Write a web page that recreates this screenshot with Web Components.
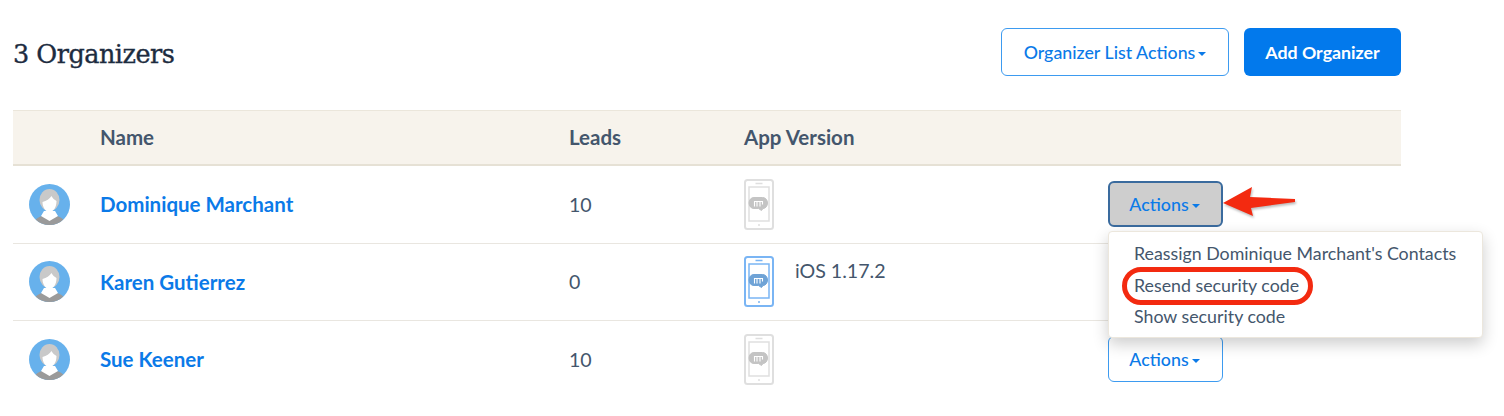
<!DOCTYPE html>
<html>
<head>
<meta charset="utf-8">
<title>Organizers</title>
<style>
    html, body { margin: 0; background: #fff; height: 416px; overflow: hidden; }
    body { font-family: Lato, sans-serif; color: #44566c; }
</style>
</head>
<body>
<organizers-page>
    <page-header slot="header" title="3 Organizers"></page-header>
    <table-head slot="table"></table-head>
    <organizer-row slot="table" name="Dominique Marchant" leads="10" open></organizer-row>
    <organizer-row slot="table" name="Karen Gutierrez" leads="0" version="iOS 1.17.2" covered></organizer-row>
    <organizer-row slot="table" name="Sue Keener" leads="10" last></organizer-row>
</organizers-page>

<script>
// Shared phone icon, the stroke colour comes from currentColor
const phoneIcon = `
    <svg width="30" height="51" viewBox="0 0 30 51" fill="none" stroke="currentColor">
        <rect x="1" y="1" width="28" height="49" rx="2.5" stroke-width="2"/>
        <rect x="5" y="8" width="20" height="34" stroke-width="1.5"/>
        <path d="M11.500 4.500h7M14 46h2" stroke-width="1.500"/>
        <path d="M10 18.500h8.500c3 0 5 2.500 5 5.500s-2 5.500-4.500 5.500l-1.500 2-3-2H10c-3 0-5-2.500-5-5.500s2-5.500 5-5.500z" fill="var(--bubble)" stroke="var(--bubble)" stroke-width="1"/>
        <path d="M10.500 27.500v-5h2.500v5M13 22.500h3v5M16 22.500h2.500v3" stroke-width="1.100" stroke="#fff"/>
    </svg>`;

class OrganizersPage extends HTMLElement {
    constructor() {
        super();
        this.attachShadow({ mode: 'open' });
        this.shadowRoot.innerHTML = `
            <style>
                :host { display: block; position: relative; width: 1504px; height: 416px; overflow: hidden; }
                .wrap { width: 1388px; margin-left: 13px; padding-top: 28px; }
                .table { margin-top: 34px; }
            </style>
            <div class="wrap">
                <slot name="header"></slot>
                <div class="table"><slot name="table"></slot></div>
            </div>
        `;
    }
}

class PageHeader extends HTMLElement {
    constructor() {
        super();
        this.attachShadow({ mode: 'open' });
        this.shadowRoot.innerHTML = `
            <style>
                :host { display: flex; align-items: center; justify-content: space-between; height: 48px; }
                h1 { margin: 0; padding-top: 5px; font: 400 25.500px/1 "DejaVu Serif", serif; color: #1d2c3f; letter-spacing: -0.5px; -webkit-text-stroke: .35px #1d2c3f; }
                .btns { display: flex; gap: 15px; }
                button { box-sizing: border-box; height: 48px; border-radius: 6px; font: 500 17.800px Lato, sans-serif; padding: 0; cursor: pointer; }
                .outline { width: 228px; background: #fff; color: #0b7ae8; border: 1.500px solid #3d9bf0; }
                .solid { width: 157px; background: #0279ec; color: #fff; border: none; font-weight: 700; }
                i { display: inline-block; vertical-align: 3px; margin-left: 3px; border: 4.500px solid transparent; border-top-color: currentColor; border-bottom: 0; }
            </style>
            <h1></h1>
            <div class="btns">
                <button class="outline">Organizer List Actions<i></i></button>
                <button class="solid">Add Organizer</button>
            </div>
        `;
    }

    connectedCallback() {
        this.shadowRoot.querySelector('h1').innerText = this.getAttribute('title');
    }
}

class TableHead extends HTMLElement {
    constructor() {
        super();
        this.attachShadow({ mode: 'open' });
        this.shadowRoot.innerHTML = `
            <style>
                :host {
                    display: grid;
                    grid-template-columns: 87px 469px 175px 1fr;
                    align-items: center;
                    box-sizing: border-box;
                    height: 56px;
                    padding-bottom: 2px;
                    background: #f7f3ec;
                    border-top: 1px solid #ebe6db;
                    border-bottom: 2px solid #e6e1d5;
                    font: 700 20.500px Lato, sans-serif;
                    color: #44566c;
                }
            </style>
            <span></span><span>Name</span><span>Leads</span><span>App Version</span>
        `;
    }
}

class OrganizerRow extends HTMLElement {
    constructor() {
        super();
        this.attachShadow({ mode: 'open' });
        this.shadowRoot.innerHTML = `
            <style>
                :host {
                    display: grid;
                    grid-template-columns: 87px 469px 175px 364px 1fr;
                    align-items: center;
                    box-sizing: border-box;
                    height: 77.500px;
                    border-bottom: 1px solid #e9e6e0;
                    position: relative;
                    font: 400 19.600px Lato, sans-serif;
                    color: #44566c;
                }
                :host([last]) { border-bottom: 1px solid transparent; }
                .avatar { margin-left: 16px; }
                a { font-weight: 700; font-size: 20.500px; color: #0b7ae8; text-decoration: none; }
                .app { display: flex; align-items: flex-start; gap: 21px; }
                .phone { color: #dfdfdf; --bubble: #c4c4c4; display: flex; }
                :host([version]) .phone { color: #7ab5f4; --bubble: #6fa3d6; }
                .ver { padding-top: 4px; line-height: 22px; }
                .action { display: block; box-sizing: border-box; width: 115px; height: 46px; border: 1.500px solid #3d9bf0; border-radius: 6px; background: #fff; color: #0b7ae8; font: 500 17.800px Lato, sans-serif; padding: 0 2px 0 0; }
                :host([open]) .action { background: #cecece; border: 2px solid #3a6b9e; }
                i { display: inline-block; vertical-align: 3px; margin-left: 3px; border: 4.500px solid transparent; border-top-color: currentColor; border-bottom: 0; }
                .menu {
                    position: absolute; z-index: 2; left: 1095px; top: 65px; box-sizing: border-box;
                    width: 375px; height: 107px; padding: 6px 0 0 25px;
                    background: #fff; border: 1px solid #ece7dd; border-radius: 4px;
                    box-shadow: 0 6px 16px rgba(0,0,0,.2);
                    font-size: 17.800px; line-height: 31.500px;
                }
                .menu div { white-space: nowrap; }
                .ring { position: absolute; left: 13px; top: 35px; width: 191px; height: 38px; box-sizing: border-box; border: 5.500px solid #f32a10; border-radius: 19px; }
                .arrow { position: absolute; left: 1205px; top: 16px; z-index: 3; }
            </style>
            <svg class="avatar" width="41" height="41" viewBox="0 0 41 41">
                <defs><clipPath id="c"><circle cx="20.500" cy="20.500" r="20.500"/></clipPath></defs>
                <g clip-path="url(#c)">
                    <rect width="41" height="41" fill="#67b1ec"/>
                    <path d="M4 41c1-7 8-9 13-10h7c5 1 12 3 13 10z" fill="#9a9a9a"/>
                    <ellipse cx="20.500" cy="16" rx="10" ry="11" fill="#c9c9c9"/>
                    <path d="M13.500 18c4-1 7-3 9-6 1 2 3 4 5 5 0 7-3.500 11-7 11s-7-4-7-10z" fill="#fff"/>
                    <path d="M15 27h11l3 5-8.500 5-8.500-5z" fill="#fff"/>
                </g>
            </svg>
            <a href="#" class="name"></a>
            <span class="leads"></span>
            <div class="app"><span class="phone">${phoneIcon}</span><span class="ver"></span></div>
            <div class="cell"><button class="action">Actions<i></i></button></div>
        `;
    }

    connectedCallback() {
        const root = this.shadowRoot;
        root.querySelector('.name').innerText = this.getAttribute('name');
        root.querySelector('.leads').innerText = this.getAttribute('leads');
        root.querySelector('.ver').innerText = this.getAttribute('version') || '';

        // The open menu lies on top of this row's button, so it is not drawn
        if (this.hasAttribute('covered')) root.querySelector('.action').remove();

        // Only the opened row carries the menu and the red annotations
        if (this.hasAttribute('open')) {
            const who = this.getAttribute('name');
            root.querySelector('.cell').insertAdjacentHTML('beforeend', `
                <div class="menu">
                    <div>Reassign ${who}'s Contacts</div>
                    <div>Resend security code</div>
                    <div>Show security code</div>
                    <div class="ring"></div>
                </div>
                <svg class="arrow" width="80" height="40" viewBox="0 0 80 40">
                    <path d="M5 21 L34 5 L32 15 L77 17 L77 20 L33 26 L35 34 Z" fill="#f32a10" style="filter:drop-shadow(1px 2px 1px rgba(0,0,0,.25))"/>
                </svg>`);
            this.style.zIndex = 2;
        }
    }
}

// Define the custom elements
customElements.define('organizers-page', OrganizersPage);
customElements.define('page-header', PageHeader);
customElements.define('table-head', TableHead);
customElements.define('organizer-row', OrganizerRow);
</script>
</body>
</html>
